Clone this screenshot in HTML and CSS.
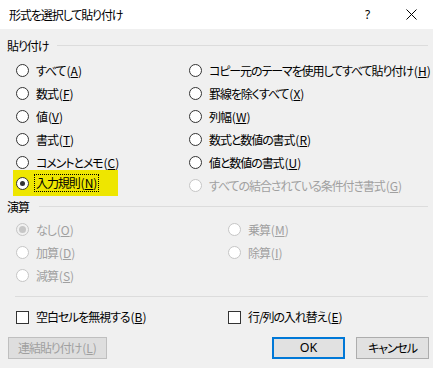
FILE: index.html
```html
<!DOCTYPE html>
<html lang="ja">
<head>
<meta charset="utf-8">
<title>形式を選択して貼り付け</title>
<link rel="stylesheet" href="styles.css">
</head>
<body>
<div class="dialog">
  <div class="titlebar">
    <span class="title">形式を選択して貼り付け</span>
    <span class="help">?</span>
    <span class="close">
      <svg width="11" height="11" viewBox="0 0 11 11"><path d="M0.5 0.5L10.5 10.5M10.5 0.5L0.5 10.5" stroke="#000" stroke-width="1" fill="none"/></svg>
    </span>
  </div>
  <div class="content">
    <div class="group-head head-paste"><span class="group-label">貼り付け</span><span class="rule"></span></div>
    <div class="grid grid-paste">
      <div class="opt"><span class="radio"></span><span>すべて<span class="ak">(<u>A</u>)</span></span></div>
      <div class="opt"><span class="radio"></span><span>コピー元のテーマを使用してすべて貼り付け<span class="ak">(<u>H</u>)</span></span></div>
      <div class="opt"><span class="radio"></span><span>数式<span class="ak">(<u>F</u>)</span></span></div>
      <div class="opt"><span class="radio"></span><span>罫線を除くすべて<span class="ak">(<u>X</u>)</span></span></div>
      <div class="opt"><span class="radio"></span><span>値<span class="ak">(<u>V</u>)</span></span></div>
      <div class="opt"><span class="radio"></span><span>列幅<span class="ak">(<u>W</u>)</span></span></div>
      <div class="opt"><span class="radio"></span><span>書式<span class="ak">(<u>T</u>)</span></span></div>
      <div class="opt"><span class="radio"></span><span>数式と数値の書式<span class="ak">(<u>R</u>)</span></span></div>
      <div class="opt"><span class="radio"></span><span>コメントとメモ<span class="ak">(<u>C</u>)</span></span></div>
      <div class="opt"><span class="radio"></span><span>値と数値の書式<span class="ak">(<u>U</u>)</span></span></div>
      <div class="opt hl"><span class="radio checked"></span><span class="focus">入力規則<span class="ak">(<u>N</u>)</span></span></div>
      <div class="opt disabled"><span class="radio"></span><span>すべての結合されている条件付き書式<span class="ak">(<u>G</u>)</span></span></div>
    </div>
    <div class="group-head head-op"><span class="group-label">演算</span><span class="rule"></span></div>
    <div class="grid grid-op">
      <div class="opt disabled"><span class="radio checked"></span><span>なし<span class="ak">(<u>O</u>)</span></span></div>
      <div class="opt disabled"><span class="radio"></span><span>乗算<span class="ak">(<u>M</u>)</span></span></div>
      <div class="opt disabled"><span class="radio"></span><span>加算<span class="ak">(<u>D</u>)</span></span></div>
      <div class="opt disabled"><span class="radio"></span><span>除算<span class="ak">(<u>I</u>)</span></span></div>
      <div class="opt disabled"><span class="radio"></span><span>減算<span class="ak">(<u>S</u>)</span></span></div>
    </div>
    <div class="separator"></div>
    <div class="grid grid-check">
      <div class="opt"><span class="check"></span><span>空白セルを無視する<span class="ak">(<u>B</u>)</span></span></div>
      <div class="opt"><span class="check"></span><span>行/列の入れ替え<span class="ak">(<u>E</u>)</span></span></div>
    </div>
    <div class="buttons">
      <button class="btn btn-link" disabled>連結貼り付け<span class="ak">(<u>L</u>)</span></button>
      <span class="spacer"></span>
      <button class="btn btn-ok">OK</button>
      <button class="btn btn-cancel">キャンセル</button>
    </div>
  </div>
</div>
</body>
</html>
```
FILE: styles.css
```css
* { box-sizing: border-box; }
html, body {
  margin: 0;
  padding: 0;
  background: #f0f0f0;
}
body {
  font-family: "Noto Sans CJK JP", "Noto Sans", sans-serif;
  font-size: 12px;
  letter-spacing: -1.1px;
  color: #000;
  font-feature-settings: "palt";
}
.ak {
  letter-spacing: 0;
  margin-left: 1px;
}
.dialog {
  width: 433px;
  height: 368px;
  background: #f0f0f0;
  overflow: hidden;
}
.titlebar {
  height: 29px;
  background: #fff;
  display: flex;
  align-items: center;
  padding-left: 9px;
}
.title {
  flex: 1;
  line-height: 16px;
}
.help {
  width: 12px;
  margin-right: 29px;
  font-family: "Noto Sans", sans-serif;
  font-size: 12px;
  letter-spacing: 0;
  line-height: 14px;
}
.close {
  display: flex;
  width: 11px;
  height: 11px;
  margin-right: 16px;
}
.content {
  padding: 0 5px 0 7px;
}
.group-head {
  display: flex;
  align-items: center;
  height: 18px;
}
.head-paste { margin-top: 8px; }
.head-op { margin-top: 1px; }
.group-label {
  line-height: 18px;
}
.rule {
  flex: 1;
  height: 1px;
  background: #dcdcdc;
  margin-left: 9px;
  margin-top: -1px;
}
.head-op .rule { margin-left: 10px; }
.grid {
  display: grid;
  grid-auto-rows: 23px;
  margin-left: 9px;
}
.grid-paste {
  margin-top: 4px;
  grid-template-columns: 173px 1fr;
}
.grid-op {
  margin-top: 2px;
  grid-template-columns: 212px 1fr;
}
.grid-check {
  margin-top: 9px;
  grid-template-columns: 212px 1fr;
  grid-auto-rows: 22px;
}
.opt {
  display: flex;
  align-items: center;
  white-space: nowrap;
  line-height: 16px;
}
.opt .radio, .opt .check {
  margin-right: 7px;
}
.radio {
  width: 13px;
  height: 13px;
  border: 1px solid #333;
  border-radius: 50%;
  background: #fff;
  display: flex;
  align-items: center;
  justify-content: center;
  flex: none;
}
.radio.checked::after {
  content: "";
  width: 5px;
  height: 5px;
  border-radius: 50%;
  background: #333;
}
.check {
  width: 13px;
  height: 13px;
  border: 1px solid #333;
  background: #fff;
  flex: none;
}
.disabled { color: #a0a0a0; }
.disabled .radio {
  border-color: #c6c6c6;
  background: #fff;
}
.disabled .radio.checked {
  background: #f0f0f0;
}
.disabled .radio.checked::after {
  background: #c6c6c6;
  width: 7px;
  height: 7px;
}
.hl {
  background: #eee600;
  align-self: start;
  margin-left: -3px;
  margin-top: -4px;
  height: 26px;
  width: 105px;
  padding-left: 3px;
}
.hl .radio { margin-right: 5px; }
.focus {
  border: 1px dotted #000;
  padding: 0 1px;
  height: 18px;
  line-height: 16px;
}
.separator {
  height: 1px;
  background: #dcdcdc;
  margin: 9px 0 0 8px;
}
.buttons {
  display: flex;
  margin-top: 9px;
  padding-left: 1px;
}
.spacer { flex: 1; }
.btn {
  font-family: inherit;
  font-size: 12px;
  letter-spacing: -1.1px;
  font-feature-settings: "palt";
  height: 22px;
  padding: 0;
  background: #e1e1e1;
  border: 1px solid #adadad;
  color: #000;
  line-height: 16px;
}
.btn-link {
  width: 99px;
  color: #a0a0a0;
  background: #dedede;
  border-color: #bfbfbf;
}
.btn-ok {
  width: 73px;
  border: 2px solid #0078d7;
  margin-right: 11px;
  font-family: "Noto Sans", sans-serif;
  letter-spacing: 0;
  font-size: 12.5px;
}
.btn-cancel {
  width: 73px;
  margin-right: -1px;
}
u { text-decoration: underline; text-underline-offset: 1px; }
```
